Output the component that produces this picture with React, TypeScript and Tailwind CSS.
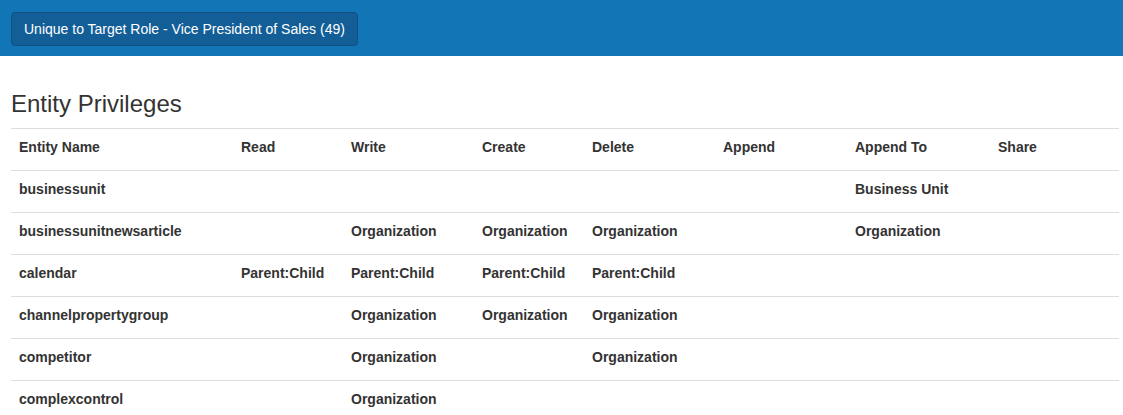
import React from 'react';

const columns = ['Entity Name', 'Read', 'Write', 'Create', 'Delete', 'Append', 'Append To', 'Share'];

const rows: string[][] = [
  ['businessunit', '', '', '', '', '', 'Business Unit', ''],
  ['businessunitnewsarticle', '', 'Organization', 'Organization', 'Organization', '', 'Organization', ''],
  ['calendar', 'Parent:Child', 'Parent:Child', 'Parent:Child', 'Parent:Child', '', '', ''],
  ['channelpropertygroup', '', 'Organization', 'Organization', 'Organization', '', '', ''],
  ['competitor', '', 'Organization', '', 'Organization', '', '', ''],
  ['complexcontrol', '', 'Organization', '', '', '', '', ''],
];

const gridCols = 'grid grid-cols-[222px_110px_131px_110px_131px_132px_143px_129px]';

function Row({ cells }: { cells: string[] }) {
  return (
    <div className={`${gridCols} h-[42px] border-t border-[#dddddd]`}>
      {cells.map((cell, i) => (
        <div key={i} className="px-2 pt-2 text-[14px] leading-5 font-bold text-[#333333] whitespace-nowrap">
          {cell}
        </div>
      ))}
    </div>
  );
}

export default function App() {
  return (
    <div className="min-h-[415px] bg-white font-['Liberation_Sans',Arial,sans-serif]">
      <div className="h-[56px] bg-[#1275b6] px-[11px] pt-[12px]">
        <button className="h-[34px] px-[12px] rounded-[4px] border border-[#0f5083] bg-[#135e97] text-[14px] text-white leading-5">
          Unique to Target Role - Vice President of Sales (49)
        </button>
      </div>

      <div className="px-[11px] pt-[35px]">
        <h3 className="text-[24px] leading-[26px] text-[#333333] mb-[11px]">Entity Privileges</h3>
        <div className="w-[1108px]">
          <Row cells={columns} />
          {rows.map((r) => (
            <Row key={r[0]} cells={r} />
          ))}
        </div>
      </div>
    </div>
  );
}
